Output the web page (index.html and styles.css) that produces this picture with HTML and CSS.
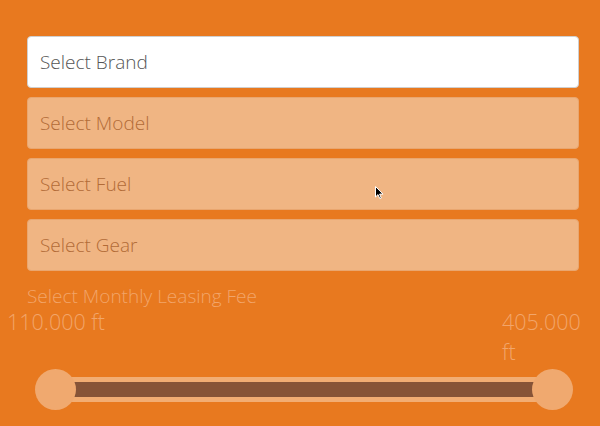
FILE: index.html
```html
<!DOCTYPE html>
<html>
<head>
<meta charset="utf-8">
<link rel="stylesheet" href="styles.css">
</head>
<body>
<div class="page">
  <div class="form">
    <div class="field field-active">Select Brand</div>
    <div class="field">Select Model</div>
    <div class="field">Select Fuel</div>
    <div class="field">Select Gear</div>
    <div class="fee-label">Select Monthly Leasing Fee</div>
  </div>
  <div class="range-labels">
    <div class="range-value">110.000 ft</div>
    <div class="range-value range-value-max">405.000 ft</div>
  </div>
  <div class="slider">
    <div class="track"><div class="fill"></div></div>
    <div class="handle handle-min"></div>
    <div class="handle handle-max"></div>
  </div>
  <svg class="cursor" width="9" height="14" viewBox="0 0 9 14"><path d="M0.5 0.5 L0.5 11 L3 8.6 L4.8 12.6 L6.3 12 L4.6 8.1 L8 8.1 Z" fill="#000" stroke="#fff" stroke-width="1"/></svg>
</div>
</body>
</html>
```

FILE: styles.css
```css
* { box-sizing: border-box; }
html, body {
  margin: 0;
  padding: 0;
}
body {
  background: #e8791f;
  font-family: "Open Sans", "DejaVu Sans", sans-serif;
  width: 600px;
  height: 426px;
  overflow: hidden;
}
.page {
  position: relative;
  height: 426px;
  padding-top: 36px;
}
.form {
  margin: 0 21px 0 27px;
  display: flex;
  flex-direction: column;
  gap: 9px;
}
.field {
  height: 52px;
  border-radius: 4px;
  background: #f0b583;
  border: 1px solid #e9a66f;
  color: #b26b37;
  font-size: 19px;
  font-weight: 300;
  display: flex;
  align-items: center;
  padding-left: 12px;
}
.field-active {
  background: #ffffff;
  border: 1px solid #cfcfcf;
  color: #555555;
}
.fee-label {
  margin-top: 4px;
  color: #f2a56a;
  font-size: 19px;
  font-weight: 300;
  line-height: 24px;
}
.range-labels {
  display: flex;
  justify-content: space-between;
  align-items: flex-start;
  margin-left: 7px;
  margin-top: -1px;
}
.range-value {
  width: 100px;
  color: #f2a56a;
  font-size: 21.5px;
  font-weight: 300;
  line-height: 30px;
}
.range-value-max {
  width: 84px;
  margin-right: 14px;
}
.slider {
  position: relative;
  margin: 2px 27px 0 35px;
  height: 41px;
  padding: 0 20px;
  display: flex;
  align-items: center;
}
.track {
  flex: 1;
  height: 25px;
  background: #f2ad73;
  padding: 5px 0;
  display: flex;
}
.fill {
  flex: 1;
  background: #875437;
}
.handle {
  position: absolute;
  top: 0;
  width: 41px;
  height: 41px;
  border-radius: 50%;
  background: #f0a96f;
}
.handle-min { left: 0; }
.handle-max { right: 0; }
.cursor {
  position: absolute;
  left: 375px;
  top: 186px;
}
```
